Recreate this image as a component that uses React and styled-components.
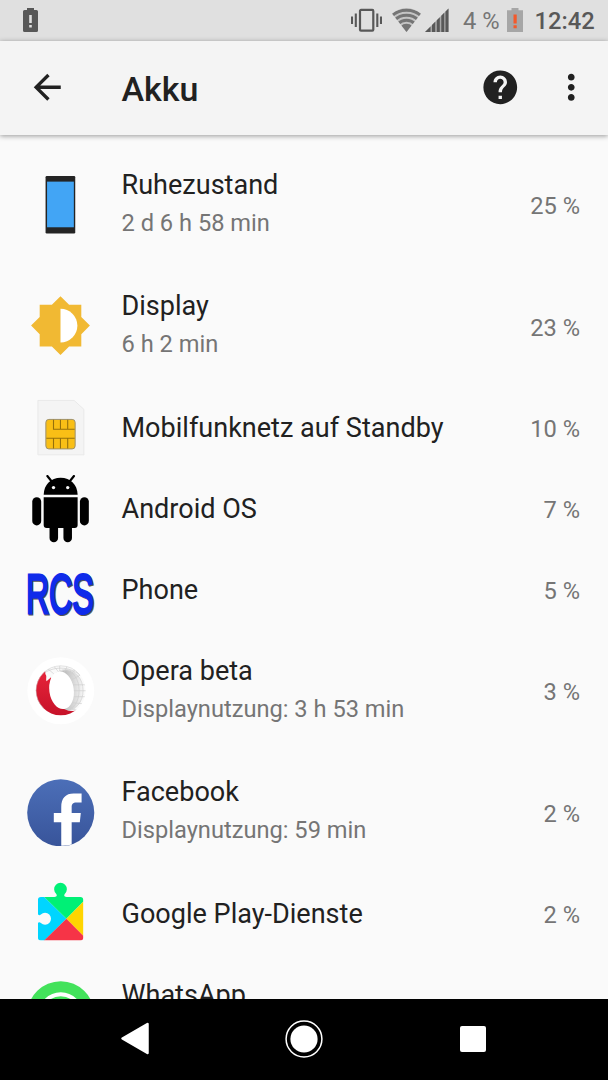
import React from "react";
import styled, { createGlobalStyle } from "styled-components";

const items = [
  { icon: PhoneIcon, title: "Ruhezustand", detail: "2 d 6 h 58 min", percent: "25 %" },
  { icon: BrightnessIcon, title: "Display", detail: "6 h 2 min", percent: "23 %" },
  { icon: SimIcon, title: "Mobilfunknetz auf Standby", percent: "10 %" },
  { icon: AndroidIcon, title: "Android OS", percent: "7 %" },
  { icon: RcsIcon, title: "Phone", percent: "5 %" },
  { icon: OperaIcon, title: "Opera beta", detail: "Displaynutzung: 3 h 53 min", percent: "3 %" },
  { icon: FacebookIcon, title: "Facebook", detail: "Displaynutzung: 59 min", percent: "2 %" },
  { icon: PlayServicesIcon, title: "Google Play-Dienste", percent: "2 %" },
  { icon: WhatsAppIcon, title: "WhatsApp", detail: " ", percent: "" },
];

export default function App() {
  return (
    <Screen>
      <GlobalStyle />
      <StatusBar />
      <Toolbar>
        <ToolbarButton aria-label="Zurück">
          <svg viewBox="0 0 24 24">
            <path d="M20 11H7.83l5.59-5.59L12 4l-8 8 8 8 1.41-1.41L7.83 13H20v-2z" />
          </svg>
        </ToolbarButton>
        <ToolbarTitle>Akku</ToolbarTitle>
        <ToolbarButton aria-label="Hilfe">
          <svg viewBox="0 0 24 24">
            <path d="M12 2C6.48 2 2 6.48 2 12s4.48 10 10 10 10-4.48 10-10S17.52 2 12 2zm1 17h-2v-2h2v2zm2.07-7.75l-.9.92C13.45 12.9 13 13.5 13 15h-2v-.5c0-1.1.45-2.1 1.17-2.83l1.24-1.26c.37-.36.59-.86.59-1.41 0-1.1-.9-2-2-2s-2 .9-2 2H8c0-2.21 1.79-4 4-4s4 1.79 4 4c0 .88-.36 1.68-.93 2.25z" />
          </svg>
        </ToolbarButton>
        <ToolbarButton aria-label="Mehr">
          <svg viewBox="0 0 24 24">
            <path d="M12 8c1.1 0 2-.9 2-2s-.9-2-2-2-2 .9-2 2 .9 2 2 2zm0 2c-1.1 0-2 .9-2 2s.9 2 2 2 2-.9 2-2-.9-2-2-2zm0 6c-1.1 0-2 .9-2 2s.9 2 2 2 2-.9 2-2-.9-2-2-2z" />
          </svg>
        </ToolbarButton>
      </Toolbar>
      <List>
        {items.map(({ icon: Icon, title, detail, percent }) => (
          <Row key={title} $tall={Boolean(detail)}>
            <IconBox>
              <Icon />
            </IconBox>
            <Labels>
              <Title>{title}</Title>
              {detail && <Detail>{detail}</Detail>}
            </Labels>
            <Percent>{percent}</Percent>
          </Row>
        ))}
      </List>
      <NavBar>
        <NavButton aria-label="Zurück">
          <svg width="30" height="34" viewBox="0 0 30 34">
            <path d="M27.500 2v29L2.500 16.500z" fill="#fff" stroke="#fff" strokeWidth="2.500" strokeLinejoin="round" />
          </svg>
        </NavButton>
        <NavButton aria-label="Start">
          <svg width="40" height="40" viewBox="0 0 40 40">
            <circle cx="20" cy="20" r="17.900" fill="none" stroke="#fff" strokeWidth="1.500" />
            <circle cx="20" cy="20" r="13.600" fill="#fff" />
          </svg>
        </NavButton>
        <NavButton aria-label="Übersicht">
          <Square />
        </NavButton>
      </NavBar>
    </Screen>
  );
}

function StatusBar() {
  return (
    <StatusRow>
      <svg width="15" height="25" viewBox="0 0 15 25">
        <path d="M4 0h7v2h2.500q1.500 0 1.500 1.500v19q0 1.500-1.500 1.500h-12Q0 24 0 22.500V3.500Q0 2 1.500 2H4z" fill="#585858" />
        <path d="M6.200 7h2.600v8H6.200zM6.200 17h2.600v2.600H6.200z" fill="#e0e0e0" />
      </svg>
      <StatusSpacer />
      <svg width="31" height="25" viewBox="0 0 31 25">
        <rect x="9" y="1.900" width="13.300" height="20.800" rx="1" fill="none" stroke="#585858" strokeWidth="2.200" />
        <path d="M1 8.500v7.500M4.800 5.500v13.500M26.300 5.500v13.500M30 8.500v7.500" stroke="#585858" strokeWidth="2.100" />
      </svg>
      <WifiGlyph />
      <SignalGlyph />
      <BatteryLevel>4 %</BatteryLevel>
      <svg width="16" height="25" viewBox="0 0 16 25">
        <path d="M4.500 0h7v2.200H16V24H0V2.200h4.500z" fill="#a6a6a6" />
        <path d="M6.500 6.500h3.200v9H6.500zM6.500 17.300h3.200v2.900H6.500z" fill="#f4592a" />
      </svg>
      <Clock>12:42</Clock>
    </StatusRow>
  );
}

function WifiGlyph() {
  return (
    <WifiSvg width="29" height="25" viewBox="0 0 29 25">
      <clipPath id="fan">
        <path d="M14.500 24L0 5.500Q14.500-5.500 29 5.500z" />
      </clipPath>
      <g clipPath="url(#fan)">
        <rect width="29" height="25" fill="#c4c4c4" />
        <g fill="none" stroke="#757575" strokeWidth="3.100">
          <circle cx="14.500" cy="24" r="21.800" />
          <circle cx="14.500" cy="24" r="16.800" />
          <circle cx="14.500" cy="24" r="11.800" />
        </g>
        <circle cx="14.500" cy="24" r="8.300" fill="#757575" />
      </g>
    </WifiSvg>
  );
}

function SignalGlyph() {
  return (
    <SignalSvg width="24" height="25" viewBox="0 0 24 25">
      <path d="M0 24L23.500.500V24z" fill="#a8a8a8" />
      <path
        d="M0 24l5.500-5.500V24zM7 24v-7l3.200-3.200V24zM11.800 24V12.200L14.800 9.200V24zM16.300 24V7.700l2.900-2.900V24zM20.500 24V3.500l3-3V24z"
        fill="#585858"
      />
    </SignalSvg>
  );
}

function PhoneIcon() {
  return (
    <svg viewBox="0 0 68 68">
      <rect x="18.700" y="5" width="29.900" height="58" rx="1.200" fill="#242424" />
      <rect x="20.200" y="10.700" width="27" height="46" fill="#42a5f5" />
    </svg>
  );
}

function BrightnessIcon() {
  return (
    <svg viewBox="0 0 68 68">
      <g transform="translate(2.300 1.400) scale(2.620)">
        <path
          d="M20 15.310L23.310 12 20 8.690V4h-4.690L12 .690 8.690 4H4v4.690L.690 12 4 15.310V20h4.690L12 23.310 15.310 20H20z"
          fill="#f1b933"
        />
        <path d="M12 5.500a6.500 6.500 0 0 1 0 13z" fill="#fff" />
      </g>
    </svg>
  );
}

function SimIcon() {
  return (
    <svg viewBox="0 0 68 68">
      <path d="M11 6.500h36.500l9.800 9v45.800H11z" fill="#f4f4f4" stroke="#e9e9e9" strokeLinejoin="round" />
      <rect x="19" y="25.600" width="29.500" height="29.700" rx="3" fill="#f9bf16" stroke="#9c8f6a" />
      <path
        d="M26.700 26v9.500H48M19.500 44.500H48M33.700 26v9.500M41 26v9.500M26.700 44.500V55M33.700 44.500V55M41 44.500V55"
        fill="none"
        stroke="#94700c"
        strokeWidth="1.100"
      />
    </svg>
  );
}

function AndroidIcon() {
  return (
    <svg viewBox="0 0 68 68">
      <path d="M16.800 20C17 9.500 24 2.700 33.900 2.700S50.800 9.500 51 20z" />
      <path d="M20.500 1l4 5M47.300 1l-4 5" stroke="#000" strokeWidth="2.200" strokeLinecap="round" />
      <path d="M16.800 22.400H51v28q0 3-3 3H19.800q-3 0-3-3z" />
      <rect x="5.300" y="22.300" width="9" height="28.500" rx="4.500" />
      <rect x="53.300" y="22.300" width="9" height="28.500" rx="4.500" />
      <rect x="22.700" y="45" width="8.600" height="22.800" rx="4.300" />
      <rect x="36.700" y="45" width="8.600" height="22.800" rx="4.300" />
      <circle cx="26.700" cy="12.700" r="1.700" fill="#fafafa" />
      <circle cx="41" cy="12.700" r="1.700" fill="#fafafa" />
    </svg>
  );
}

function RcsIcon() {
  return (
    <RcsSvg viewBox="0 0 68 68">
      <RcsText transform="translate(-.200 58.300) scale(.578 1)" fill="#555" stroke="#555">
        RCS
      </RcsText>
      <RcsText transform="translate(-1.100 57.500) scale(.578 1)" fill="#0f2bea" stroke="#0f2bea">
        RCS
      </RcsText>
    </RcsSvg>
  );
}

function OperaIcon() {
  return (
    <svg viewBox="0 0 68 68">
      <defs>
        <linearGradient id="operaInner" x1="0" y1="0" x2="1" y2="0">
          <stop offset="0.350" stopColor="#b4b4b4" />
          <stop offset="0.700" stopColor="#d6d6d6" />
          <stop offset="1" stopColor="#f6f6f6" />
        </linearGradient>
        <linearGradient id="operaRed" x1="0" y1="0" x2="0" y2="1">
          <stop offset="0" stopColor="#e8243a" />
          <stop offset="1" stopColor="#c00f26" />
        </linearGradient>
        <clipPath id="operaDisc">
          <circle cx="34" cy="33.700" r="25" />
        </clipPath>
      </defs>
      <circle cx="34" cy="34" r="33.700" fill="#fff" />
      <g clipPath="url(#operaDisc)">
        <rect width="68" height="68" fill="#fafafa" />
        <ellipse cx="39.500" cy="33.700" rx="17" ry="20.500" fill="url(#operaInner)" />
        <g fill="none" stroke="#cfcfcf" strokeWidth=".700">
          <ellipse cx="39" cy="33.700" rx="13.500" ry="20" />
          <ellipse cx="39" cy="33.700" rx="17.500" ry="21" />
          <path d="M20 11l7 6M26 8l5 6M33 6v8M41 8l-3 7M49 12l-6 7M54 18l-9 5M45 28h14M46 34h14M46 40h14M44 46l12 1M40 51l12 3M15 18c10-9 28-9 38 0" />
        </g>
        <path d="M18.200 12l.300 5.500c2 2 0 4.500 1.200 7l4.500-4c-1.500 13 1 21 6.800 27 5.500 5.500 11 8 20 6.500l3-1L46 68H0V18z" fill="url(#operaRed)" />
      </g>
      <circle cx="34" cy="33.700" r="24.800" fill="none" stroke="#c9c9c9" strokeWidth=".500" strokeDasharray="80 76" strokeDashoffset="98" />
      <ellipse cx="34.800" cy="33.500" rx="12.300" ry="19" transform="rotate(-8 34.800 33.500)" fill="#fff" />
    </svg>
  );
}

function FacebookIcon() {
  return (
    <svg viewBox="0 0 68 68">
      <defs>
        <linearGradient id="fb" x1="0" y1="0" x2="0" y2="1">
          <stop offset="0" stopColor="#4c6fb8" />
          <stop offset="1" stopColor="#38549a" />
        </linearGradient>
      </defs>
      <circle cx="34" cy="34" r="33.800" fill="url(#fb)" />
      <path
        d="M34.500 67.200V43.600H27v-9.300h7.500v-6c0-9 4.500-13.700 12.500-13.700h8v9h-5c-4 0-5 1.800-5 5v5.700h9.200l-1 9.300H45V65.900q-5 1.500-10.500 1.300z"
        fill="#fff"
      />
    </svg>
  );
}

function PlayServicesIcon() {
  return (
    <svg viewBox="0 0 68 68">
      <clipPath id="puzzle">
        <path d="M14 17h13.500c2.500 0 3-1.500 2-3a6.400 6.400 0 1 1 8.500 0c-1 1.500-.500 3 2 3H53.700q3 0 3 3v38q0 3-3 3H14q-3 0-3-3V44.500c0-2 1.500-2.500 3-1.200a6 6 0 1 0 0-8.600c-1.500 1.300-3 .800-3-1.200V20q0-3 3-3z" />
      </clipPath>
      <g clipPath="url(#puzzle)">
        <path d="M0 0h17.400v17L39.700 39 17 61.500H0z" fill="#00d5ff" />
        <path d="M17.400 17V0H60v18.500L39.700 39z" fill="#00f076" />
        <path d="M60 18.500v41L39.700 39z" fill="#ffd500" />
        <path d="M39.700 39L62 61.500H16.700z" fill="#f63447" />
      </g>
    </svg>
  );
}

function WhatsAppIcon() {
  return (
    <svg viewBox="0 0 68 68">
      <circle cx="34" cy="34" r="33.700" fill="#43e25b" />
      <circle cx="34" cy="33.700" r="20.400" fill="none" stroke="#fff" strokeWidth="4" />
      <path d="M12 56l3.500-13 9.500 9z" fill="#fff" />
    </svg>
  );
}

const GlobalStyle = createGlobalStyle`
  * {
    box-sizing: border-box;
  }

  body {
    margin: 0;
    background: #fafafa;
    font-family: Roboto, "Liberation Sans", sans-serif;
  }

  svg {
    display: block;
    flex: none;
  }
`;

const Screen = styled.div`
  display: flex;
  flex-direction: column;
  width: 608px;
  height: 1080px;
  overflow: hidden;
  color: #212121;
`;

const StatusRow = styled.div`
  display: flex;
  align-items: center;
  flex: none;
  height: 40.5px;
  padding: 0 13.5px 0 23px;
  background: #e0e0e0;
`;

const StatusSpacer = styled.div`
  flex: 1;
`;

const WifiSvg = styled.svg`
  margin-left: 10px;
`;

const SignalSvg = styled.svg`
  margin: 0 14px 0 4px;
`;

const BatteryLevel = styled.span`
  width: 44px;
  font-size: 23.7px;
  line-height: 28px;
  padding-top: 2px;
  color: #757575;
  white-space: nowrap;
`;

const Clock = styled.span`
  width: 60px;
  margin-left: 11.5px;
  padding-top: 2px;
  font-size: 23.7px;
  font-weight: 500;
  line-height: 28px;
  color: #585858;
  text-align: right;
`;

const Toolbar = styled.header`
  display: flex;
  align-items: center;
  flex: none;
  height: 94.5px;
  padding: 0 17px 1px 27px;
  background: #f4f4f4;
  box-shadow: 0 1px 5px rgba(0, 0, 0, 0.4);
  position: relative;
  z-index: 1;
`;

const ToolbarButton = styled.button`
  width: 40.5px;
  height: 40.5px;
  padding: 0;
  border: 0;
  background: none;

  svg {
    width: 100%;
    height: 100%;
    fill: #212121;
  }

  & + & {
    margin-left: 30.5px;
  }
`;

const ToolbarTitle = styled.h1`
  flex: 1;
  margin: 0;
  padding: 3.5px 0 0 54px;
  font-size: 34px;
  font-weight: 500;
  line-height: 40px;
`;

const List = styled.main`
  flex: 1;
  min-height: 0;
  padding-top: 9.25px;
  overflow: hidden;
  background: #fafafa;
`;

const Row = styled.div`
  display: flex;
  align-items: center;
  height: ${({ $tall }) => ($tall ? "121.5px" : "81px")};
  padding: 0 28px 0 27px;
`;

const IconBox = styled.div`
  width: 67.5px;
  height: 67.5px;
  margin-right: 27px;

  svg {
    width: 100%;
    height: 100%;
  }
`;

const Labels = styled.div`
  flex: 1;
`;

const Title = styled.div`
  font-size: 27.05px;
  line-height: 38px;
  white-space: nowrap;
`;

const Detail = styled.div`
  min-height: 41px;
  padding-bottom: 2.8px;
  font-size: 23.65px;
  line-height: 38.2px;
  color: #757575;
`;

const Percent = styled.div`
  padding-top: 2.5px;
  font-size: 23.65px;
  line-height: 28px;
  color: #757575;
`;

const RcsSvg = styled.svg`
  overflow: visible;
`;

const RcsText = styled.text`
  font-family: "Liberation Sans", sans-serif;
  font-size: 56px;
  stroke-width: 2.4px;
  vector-effect: non-scaling-stroke;
`;

const NavBar = styled.nav`
  display: grid;
  grid-template-columns: repeat(3, 169px);
  justify-content: center;
  flex: none;
  height: 81px;
  padding-bottom: 0.5px;
  background: #000;
`;

const NavButton = styled.button`
  display: flex;
  align-items: center;
  justify-content: center;
  padding: 0;
  border: 0;
  background: none;
`;

const Square = styled.span`
  width: 26px;
  height: 26px;
  border-radius: 2px;
  background: #fff;
`;
